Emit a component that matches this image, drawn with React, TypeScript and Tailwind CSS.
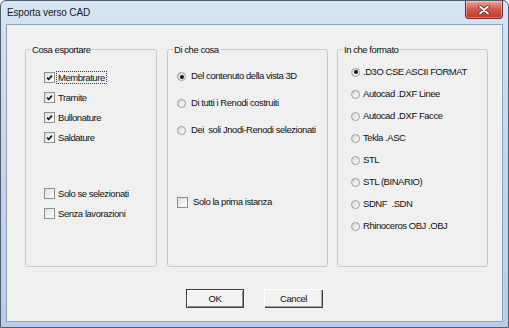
import { ReactNode } from "react"

const whatItems = [
  { label: "Membrature", checked: true, focused: true },
  { label: "Tramite", checked: true },
  { label: "Bullonature", checked: true },
  { label: "Saldature", checked: true },
]

const sourceItems = [
  { label: "Del contenuto della vista 3D", checked: true },
  { label: "Di tutti i Renodi costruiti", checked: false },
  { label: "Dei  soli Jnodi-Renodi selezionati", checked: false },
]

const formatItems = [
  { label: ".D3O CSE ASCII FORMAT", checked: true },
  { label: "Autocad .DXF Linee", checked: false },
  { label: "Autocad .DXF Facce", checked: false },
  { label: "Tekla .ASC", checked: false },
  { label: "STL", checked: false },
  { label: "STL (BINARIO)", checked: false },
  { label: "SDNF  .SDN", checked: false },
  { label: "Rhinoceros OBJ .OBJ", checked: false },
]

function CheckBox({ checked }: { checked: boolean }) {
  return (
    <span className="flex h-[11px] w-[11px] shrink-0 items-center justify-center border border-[#8e8f8f] bg-gradient-to-br from-[#dedede] to-white">
      {checked && (
        <svg width="9" height="9" viewBox="0 0 9 9">
          <path d="M2 4.6 L3.7 6.3 L7 2.6" fill="none" stroke="#1c1c1c" strokeWidth="1.6" />
        </svg>
      )}
    </span>
  )
}

function Radio({ checked }: { checked: boolean }) {
  return (
    <span className="flex h-[9px] w-[9px] shrink-0 items-center justify-center rounded-full border border-[#9b9b9b] bg-gradient-to-br from-[#d6d6d6] to-white">
      {checked && <span className="h-[4px] w-[4px] rounded-full bg-[#141414]" />}
    </span>
  )
}

function GroupBox({ title, className, children }: { title: string; className: string; children: ReactNode }) {
  return (
    <fieldset className={`h-[223px] shrink-0 rounded-[3px] border border-[#c6cacf] p-0 ${className}`}>
      <legend className="ml-[5px] px-[1px] leading-[11px]">{title}</legend>
      {children}
    </fieldset>
  )
}

export default function App() {
  return (
    <div className="flex h-[328px] w-[509px] flex-col rounded-t-[6px] border border-[#4f5d6d] bg-gradient-to-b from-[#d6e4f3] via-[#c3d6ec] to-[#b8cee8] font-['Liberation_Sans',Arial,sans-serif] text-[9.5px] tracking-[-0.45px] text-[#111]">
      {/* Title bar */}
      <div className="flex h-[23px] shrink-0 items-start">
        <span className="pl-[6px] pt-[6px] text-[10px] leading-[12px] tracking-[-0.15px] text-[#1a1a1a]">
          Esporta verso CAD
        </span>
        <div className="ml-auto mr-[5px] flex h-[18px] w-[38px] items-center justify-center rounded-b-[4px] border border-t-0 border-[#7b2a24] bg-gradient-to-b from-[#eaa89e] via-[#d2584a] to-[#c0362b] shadow-[inset_0_0_0_1px_rgba(255,255,255,0.35)]">
          <svg width="12" height="10" viewBox="0 0 12 10">
            <path d="M2 1.5 L10 8.5 M10 1.5 L2 8.5" stroke="#5a1a14" strokeWidth="3.4" strokeLinecap="round" />
            <path d="M2 1.5 L10 8.5 M10 1.5 L2 8.5" stroke="#ffffff" strokeWidth="1.9" strokeLinecap="round" />
          </svg>
        </div>
      </div>

      {/* Client area */}
      <div className="mx-[5px] mb-[5px] flex flex-1 flex-col border border-[#8ea3be] bg-[#f0f0f0]">
        <div className="mt-[19px] flex pl-[18px]">
          <GroupBox title="Cosa esportare" className="w-[132px]">
            <div className="flex flex-col pl-[18px] pt-[12px]">
              {whatItems.map((item) => (
                <div key={item.label} className="flex h-[20px] items-center gap-[1px]">
                  <CheckBox checked={item.checked} />
                  <span
                    className={`border px-[1px] leading-[11px] ${
                      item.focused ? "border-dotted border-[#3c3c3c]" : "border-transparent"
                    }`}
                  >
                    {item.label}
                  </span>
                </div>
              ))}
              <div className="mt-[36px] flex h-[20px] items-center gap-[1px]">
                <CheckBox checked={false} />
                <span className="border border-transparent px-[1px] leading-[11px]">Solo se selezionati</span>
              </div>
              <div className="flex h-[20px] items-center gap-[1px]">
                <CheckBox checked={false} />
                <span className="border border-transparent px-[1px] leading-[11px]">Senza lavorazioni</span>
              </div>
            </div>
          </GroupBox>

          <GroupBox title="Di che cosa" className="ml-[10px] w-[161px]">
            <div className="flex flex-col pl-[9px] pt-[8px]">
              {sourceItems.map((item) => (
                <div key={item.label} className="flex h-[27px] items-center gap-[5px] whitespace-pre">
                  <Radio checked={item.checked} />
                  <span>{item.label}</span>
                </div>
              ))}
              <div className="mt-[45px] flex h-[27px] items-center gap-[5px]">
                <CheckBox checked={false} />
                <span>Solo la prima istanza</span>
              </div>
            </div>
          </GroupBox>

          <GroupBox title="In che formato" className="ml-[9px] w-[151px]">
            <div className="flex flex-col pl-[13px] pt-[6px]">
              {formatItems.map((item) => (
                <div key={item.label} className="flex h-[22px] items-center gap-[3px] whitespace-pre">
                  <Radio checked={item.checked} />
                  <span>{item.label}</span>
                </div>
              ))}
            </div>
          </GroupBox>
        </div>

        {/* Buttons */}
        <div className="mt-[22px] flex justify-center gap-[20px]">
          <button className="h-[19px] w-[58px] border border-[#3f3f3f] bg-[#f2f2f2] leading-[17px] shadow-[inset_1px_1px_0_#ffffff,inset_-1px_-1px_0_#8a8a8a]">
            OK
          </button>
          <button className="h-[19px] w-[59px] bg-[#f2f2f2] leading-[19px] shadow-[inset_1px_1px_0_#ffffff,inset_-1px_-1px_0_#404040,inset_-2px_-2px_0_#a0a0a0]">
            Cancel
          </button>
        </div>
      </div>
    </div>
  )
}
